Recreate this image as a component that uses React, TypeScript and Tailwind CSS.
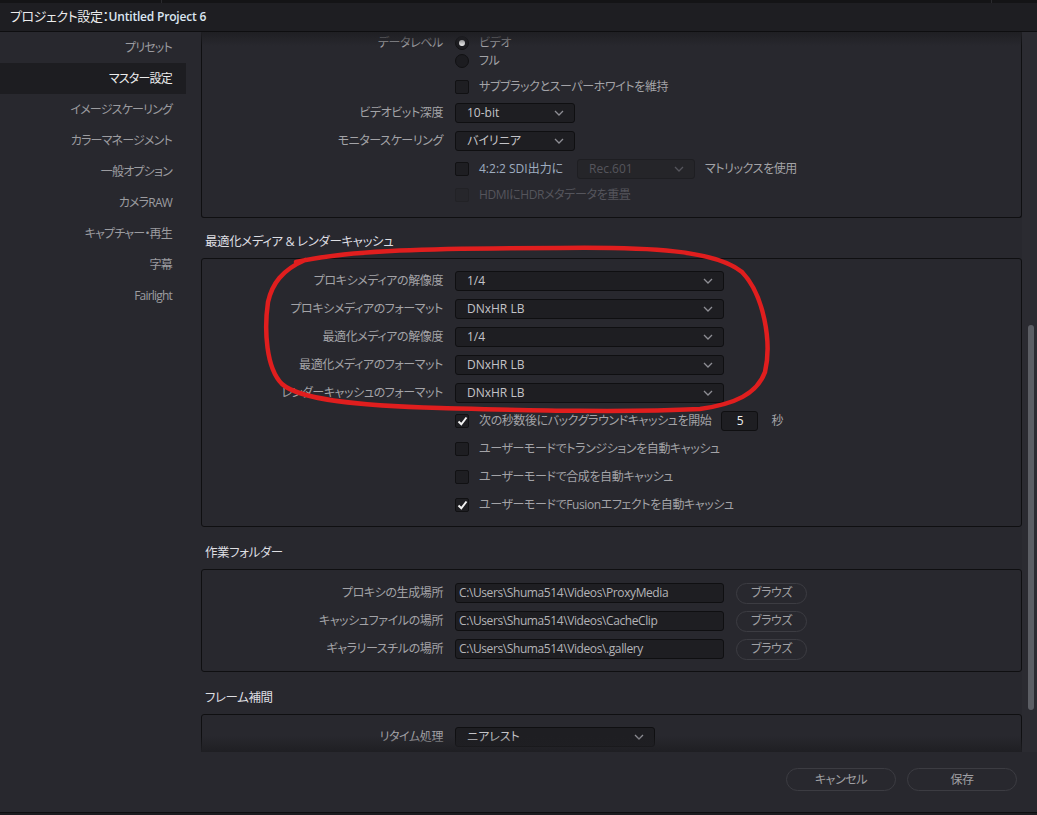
import React from 'react';

const font = {
  fontFamily: '"Open Sans", "Noto Sans CJK JP", sans-serif',
};

const Chevron = ({ color = '#8e8e94' }: { color?: string }) => (
  <svg width="10" height="6" viewBox="0 0 10 6">
    <path d="M1 1l4 4 4-4" stroke={color} strokeWidth="1.3" fill="none" />
  </svg>
);

const Select = ({ value, width }: { value: string; width: string }) => (
  <div
    className={`${width} h-[20px] flex items-center justify-between pl-[11px] pr-[10px] rounded-[3px] border border-[#0f0f11] bg-[#1e1e22] text-[12px] text-[#c4c4c8]`}
  >
    <span className="tracking-normal">{value}</span>
    <Chevron />
  </div>
);

const Checkbox = ({ checked, disabled }: { checked?: boolean; disabled?: boolean }) => (
  <div
    className={`w-[14px] h-[14px] shrink-0 rounded-[2px] border flex items-center justify-center ${
      disabled ? 'border-[#222226] bg-[#26262b]' : 'border-[#111113] bg-[#1e1e22]'
    }`}
  >
    {checked && (
      <svg width="11" height="10" viewBox="0 0 11 10">
        <path d="M1.5 5.5l2.8 2.8L9.5 1.5" stroke="#f2f2f2" strokeWidth="2" fill="none" />
      </svg>
    )}
  </div>
);

const Radio = ({ on }: { on?: boolean }) => (
  <div className="w-[14px] h-[14px] shrink-0 rounded-full border border-[#111113] bg-[#1c1c20] flex items-center justify-center">
    {on && <div className="w-[6px] h-[6px] rounded-full bg-[#eeeeee]" />}
  </div>
);

const Row = ({
  label,
  children,
  h = 'h-[28px]',
  extra = '',
}: {
  label?: string;
  children: React.ReactNode;
  h?: string;
  extra?: string;
}) => (
  <div className={`grid grid-cols-[241px_1fr] gap-x-[12px] items-center ${h} ${extra}`}>
    <div className="text-right text-[12px] text-[#a3a3a7] whitespace-nowrap">{label}</div>
    <div className="flex items-center">{children}</div>
  </div>
);

const CheckRow = ({ checked, children }: { checked?: boolean; children: React.ReactNode }) => (
  <Row>
    <Checkbox checked={checked} />
    <span className="ml-[10px] text-[12px] text-[#a3a3a7] whitespace-nowrap">{children}</span>
  </Row>
);

const SectionTitle = ({ title, h }: { title: string; h: string }) => (
  <div className={`${h} flex items-end pb-[8px] pl-[4px] text-[12.5px] leading-[16px] text-[#dedee2]`}>
    {title}
  </div>
);

const PathRow = ({ label, path }: { label: string; path: string }) => (
  <Row label={label}>
    <div className="w-[269px] h-[20px] flex items-center px-[3px] rounded-[3px] border border-[#0f0f11] bg-[#1e1e22] text-[12px] text-[#b4b4b8] whitespace-nowrap overflow-hidden">
      {path}
    </div>
    <button className="ml-[12px] w-[71px] h-[21px] rounded-full border border-[#3c3c42] text-[12px] text-[#a0a0a4]">
      ブラウズ
    </button>
  </Row>
);

const menu = [
  'プリセット',
  'マスター設定',
  'イメージスケーリング',
  'カラーマネージメント',
  '一般オプション',
  'カメラRAW',
  'キャプチャー・再生',
  '字幕',
  'Fairlight',
];

export default function App() {
  return (
    <div
      className="relative w-[1037px] h-[815px] overflow-hidden bg-[#28282e] tracking-[-0.4px] [font-feature-settings:'palt']"
      style={font}
    >
      {/* window edge */}
      <div className="h-[3px] bg-[#141416] flex">
        <div className="w-[162px] border-r border-[#2a2a2e]" />
        <div className="w-[830px] border-r border-[#2a2a2e]" />
      </div>

      {/* title */}
      <div className="h-[29px] flex items-center pl-[10px] bg-[#1e1e22] border-b border-[#0e0e10] text-[13px]">
        <span className="text-[#ececec]">プロジェクト設定：</span>
        <span className="text-[#dbe6f2] text-[12px] font-semibold tracking-[-0.2px]">Untitled Project 6</span>
      </div>

      <div className="flex h-[720px]">
        {/* sidebar */}
        <div className="w-[186px] shrink-0 tracking-[-0.8px]">
          {menu.map((m) => (
            <div
              key={m}
              className={`h-[31px] flex items-center justify-end pr-[14px] text-[12px] ${
                m === 'マスター設定' ? 'bg-[#1d1d21] text-[#ececec]' : 'text-[#9c9ca0]'
              }`}
            >
              {m}
            </div>
          ))}
        </div>

        {/* scroll area */}
        <div className="relative ml-[15px] w-[821px] shrink-0 overflow-hidden">
          <div className="border border-t-0 border-[#0f0f11] rounded-b-[3px] pt-[2px] pb-[10px]">
            <Row label="データレベル" h="h-[18px]">
              <Radio on />
              <span className="ml-[10px] text-[12px] text-[#a3a3a7]">ビデオ</span>
            </Row>
            <Row h="h-[18px]">
              <Radio />
              <span className="ml-[10px] text-[12px] text-[#a3a3a7]">フル</span>
            </Row>
            <Row h="h-[26px]" extra="mt-[4px]">
              <Checkbox />
              <span className="ml-[10px] text-[12px] text-[#a3a3a7]">サブブラックとスーパーホワイトを維持</span>
            </Row>
            <Row label="ビデオビット深度" h="h-[26px]">
              <Select value="10-bit" width="w-[120px]" />
            </Row>
            <Row label="モニタースケーリング" extra="mt-[1px]">
              <Select value="バイリニア" width="w-[120px]" />
            </Row>
            <Row>
              <Checkbox />
              <span className="ml-[10px] w-[98px] text-[12px] text-[#9fadc0] tracking-normal whitespace-nowrap">4:2:2 SDI出力に</span>
              <div className="w-[118px] h-[20px] flex items-center justify-between pl-[11px] pr-[10px] rounded-[3px] border border-[#1e1e22] bg-[#252529] text-[12px] text-[#55555c]">
                <span className="tracking-normal">Rec.601</span>
                <Chevron color="#55555c" />
              </div>
              <span className="ml-[10px] text-[12px] text-[#a3a3a7]">マトリックスを使用</span>
            </Row>
            <Row h="h-[24px]">
              <Checkbox disabled />
              <span className="ml-[10px] text-[12px] text-[#55555c]">HDMIにHDRメタデータを重畳</span>
            </Row>
          </div>

          <SectionTitle title="最適化メディア & レンダーキャッシュ" h="h-[40px]" />
          <div className="border border-[#0f0f11] rounded-[3px] pt-[8px] pb-[7px]">
            <Row label="プロキシメディアの解像度">
              <Select value="1/4" width="w-[269px]" />
            </Row>
            <Row label="プロキシメディアのフォーマット">
              <Select value="DNxHR LB" width="w-[269px]" />
            </Row>
            <Row label="最適化メディアの解像度">
              <Select value="1/4" width="w-[269px]" />
            </Row>
            <Row label="最適化メディアのフォーマット">
              <Select value="DNxHR LB" width="w-[269px]" />
            </Row>
            <Row label="レンダーキャッシュのフォーマット">
              <Select value="DNxHR LB" width="w-[269px]" />
            </Row>
            <Row>
              <Checkbox checked />
              <span className="ml-[10px] text-[12px] text-[#a3a3a7] whitespace-nowrap">
                次の秒数後にバックグラウンドキャッシュを開始
              </span>
              <div className="ml-[10px] w-[37px] h-[20px] flex items-center justify-center rounded-[3px] border border-[#0f0f11] bg-[#1e1e22] text-[12px] text-[#f0f0f0]">
                5
              </div>
              <span className="ml-[13px] text-[12px] text-[#a3a3a7]">秒</span>
            </Row>
            <CheckRow>ユーザーモードでトランジションを自動キャッシュ</CheckRow>
            <CheckRow>ユーザーモードで合成を自動キャッシュ</CheckRow>
            <CheckRow checked>ユーザーモードでFusionエフェクトを自動キャッシュ</CheckRow>
          </div>

          <SectionTitle title="作業フォルダー" h="h-[42px]" />
          <div className="border border-[#0f0f11] rounded-[3px] pt-[9px] pb-[8px]">
            <PathRow label="プロキシの生成場所" path="C:\Users\Shuma514\Videos\ProxyMedia" />
            <PathRow label="キャッシュファイルの場所" path="C:\Users\Shuma514\Videos\CacheClip" />
            <PathRow label="ギャラリースチルの場所" path="C:\Users\Shuma514\Videos\.gallery" />
          </div>

          <SectionTitle title="フレーム補間" h="h-[42px]" />
          <div className="border border-[#0f0f11] rounded-[3px] pt-[8px] pb-[8px]">
            <Row label="リタイム処理">
              <Select value="ニアレスト" width="w-[200px]" />
            </Row>
          </div>

          <div className="pointer-events-none absolute top-0 left-0 right-0 h-[14px] bg-gradient-to-b from-[#1f1f23] to-transparent" />
          <div className="pointer-events-none absolute bottom-0 left-0 right-0 h-[16px] bg-gradient-to-b from-transparent to-[#1f1f23]" />
        </div>

        {/* scrollbar */}
        <div className="flex-1 relative bg-[#2b2b31]">
          <div className="absolute left-[6px] top-[293px] w-[6px] h-[385px] rounded-full bg-[#5c5e64]" />
        </div>
      </div>

      {/* footer */}
      <div className="h-[60px] flex justify-end items-start gap-[11px] pt-[16px] pr-[20px]">
        <button className="w-[110px] h-[23px] rounded-full border border-[#3c3c42] text-[12px] text-[#a0a0a4]">
          キャンセル
        </button>
        <button className="w-[110px] h-[23px] rounded-full border border-[#3c3c42] text-[12px] text-[#a0a0a4]">
          保存
        </button>
      </div>
      <div className="h-[3px] border-t border-[#0e0e10] bg-[#1c1c20]" />

      {/* red hand-drawn annotation */}
      <svg
        className="pointer-events-none absolute inset-0"
        width="1037"
        height="815"
        viewBox="0 0 1037 815"
      >
        <path
          d="M296 262 C350 250 430 248 560 248 C650 247 715 250 742 272 C764 295 772 342 765 372 C757 394 735 404 700 409 C620 413 520 410 440 408 C360 406 300 400 282 384 C266 368 264 330 268 302 C272 284 282 270 305 260"
          stroke="#e01e1e"
          strokeWidth="4.5"
          strokeLinecap="round"
          fill="none"
        />
      </svg>
    </div>
  );
}
